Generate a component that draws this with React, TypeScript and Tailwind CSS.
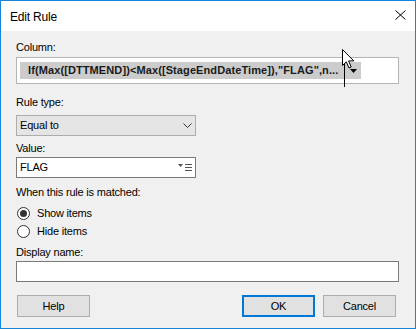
import React from 'react'

// Windows-style "Edit Rule" dialog
function Radio({ checked, label }: { checked?: boolean; label: string }) {
  return (
    <label className="h-[13px] flex items-center gap-[7px] leading-[13px]">
      <span className="w-[13px] h-[13px] shrink-0 rounded-full border border-[#333] bg-white flex items-center justify-center">
        {checked && <span className="w-[7px] h-[7px] rounded-full bg-[#333]" />}
      </span>
      <span>{label}</span>
    </label>
  )
}

function Button({ label, primary }: { label: string; primary?: boolean }) {
  return (
    <button
      className={
        primary
          ? 'w-[73px] h-[22px] bg-[#e1e1e1] border-2 border-[#0078d7] flex items-center justify-center'
          : 'w-[73px] h-[22px] bg-[#e1e1e1] border border-[#adadad] flex items-center justify-center'
      }
    >
      {label}
    </button>
  )
}

export default function App() {
  return (
    <div
      className="w-[416px] h-[329px] flex flex-col border border-[#1883d7] bg-[#f0f0f0] text-[11px] tracking-[-0.2px] text-black leading-[11px] overflow-hidden"
      style={{ fontFamily: '"Segoe UI", "Liberation Sans", Arial, sans-serif' }}
    >
      {/* Title bar */}
      <div className="h-[30px] shrink-0 bg-white flex items-center justify-between pl-[9px] pr-[9px]">
        <span className="text-[12px] leading-[12px] mt-[2px]">Edit Rule</span>
        <svg width="11" height="10" viewBox="0 0 11 10" className="mt-[-2px]">
          <path d="M0.5 0.5 L10.5 9.5 M10.5 0.5 L0.5 9.5" stroke="#000" strokeWidth="1" />
        </svg>
      </div>

      {/* Body */}
      <div className="flex-1 flex flex-col pl-[15px] pr-[16px]">
        <div className="mt-[11px] h-[11px]">Column:</div>

        <div className="relative mt-[4px] h-[27px] bg-white border border-[#b4b4b4] flex items-center pl-[3px]">
          <div className="relative h-[17px] w-[341px] bg-[#cccccc] flex items-center pl-[8px] font-bold text-[#1a1a1a] whitespace-nowrap">
            <span className="w-[314px] overflow-hidden tracking-[0.1px]">If(Max([DTTMEND])&lt;Max([StageEndDateTime]),"FLAG",n...</span>
            <span className="absolute left-[324px] top-0 w-px h-[25px] bg-black" />
            <svg width="7" height="4" viewBox="0 0 7 4" className="absolute left-[330px] top-[7px]">
              <path d="M0 0 H7 L3.5 4 Z" fill="#000" />
            </svg>
          </div>
          {/* mouse pointer */}
          <svg width="13" height="20" viewBox="0 0 13 20" className="absolute left-[325px] top-[-9px]">
            <path
              d="M0.5 0.5 V16.5 L4.3 12.8 L7 19 L9.2 18 L6.6 11.9 H11.8 Z"
              fill="#fff"
              stroke="#000"
              strokeWidth="1"
              strokeLinejoin="round"
            />
          </svg>
        </div>

        <div className="mt-[13px] h-[11px]">Rule type:</div>
        <div className="mt-[7px] w-[180px] h-[21px] bg-[#e5e5e5] border border-[#acacac] flex items-center justify-between pl-[3px] pr-[3px]">
          <span>Equal to</span>
          <svg width="9" height="5" viewBox="0 0 9 5">
            <path d="M0.5 0.5 L4.5 4.5 L8.5 0.5" fill="none" stroke="#333" strokeWidth="1" />
          </svg>
        </div>

        <div className="mt-[7px] h-[11px]">Value:</div>
        <div className="mt-[3px] w-[180px] h-[21px] bg-white border border-[#7a7a7a] flex items-center justify-between pl-[3px] pr-[2px]">
          <span>FLAG</span>
          <svg width="15" height="8" viewBox="0 0 15 8" className="mt-[1px]">
            <path d="M0 0 H5 L2.5 3 Z" fill="#555" />
            <path d="M7 0.5 H14 M7 3.5 H14 M7 6.5 H14" stroke="#555" strokeWidth="1" />
          </svg>
        </div>

        <div className="mt-[9px] h-[11px]">When this rule is matched:</div>

        <div className="mt-[9px] flex flex-col gap-[5px] pl-[1px]">
          <Radio checked label="Show items" />
          <Radio label="Hide items" />
        </div>

        <div className="mt-[9px] h-[11px]">Display name:</div>
        <div className="mt-[3px] h-[21px] bg-white border border-[#7a7a7a]" />

        <div className="mt-[13px] flex items-center justify-between pl-[1px] pr-[3px]">
          <Button label="Help" />
          <div className="flex items-center gap-[8px]">
            <Button label="OK" primary />
            <Button label="Cancel" />
          </div>
        </div>
      </div>
    </div>
  )
}
